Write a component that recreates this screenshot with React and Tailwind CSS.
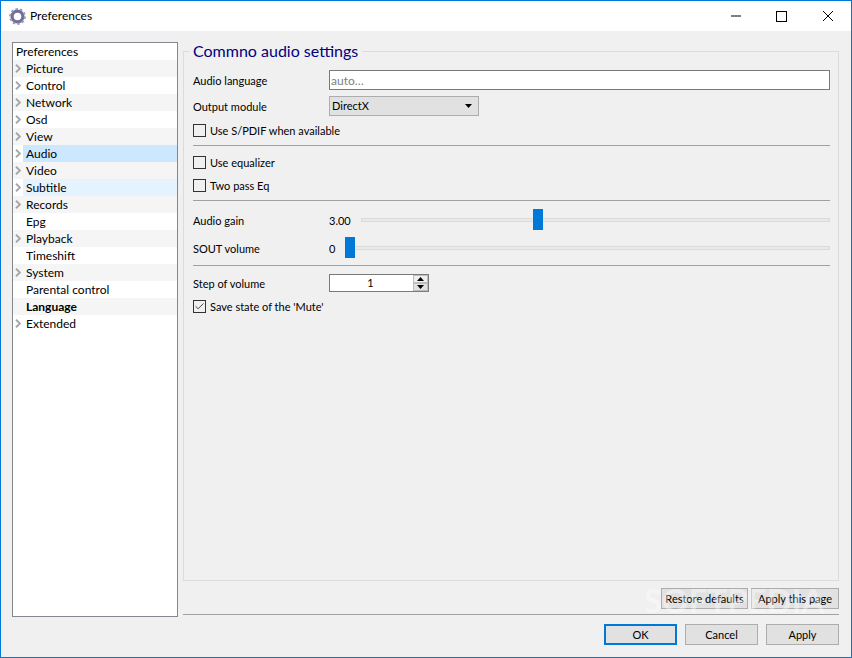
import React from 'react';
import { Check } from 'lucide-react';

const tree = [
  ['Preferences', 0, ''], ['Picture', 1, 'alt'], ['Control', 1, ''], ['Network', 1, 'alt'], ['Osd', 1, ''],
  ['View', 1, 'alt'], ['Audio', 1, 'sel'], ['Video', 1, 'alt'], ['Subtitle', 1, 'hov'], ['Records', 1, 'alt'],
  ['Epg', 2, ''], ['Playback', 1, 'alt'], ['Timeshift', 2, ''], ['System', 1, 'alt'], ['Parental control', 2, ''],
  ['Language', 2, 'altb'], ['Extended', 1, ''],
];

const rowBg = { alt: 'bg-[#f5f5f5]', altb: 'bg-[#f5f5f5]', sel: 'bg-[#cce8ff]', hov: 'bg-[#e5f3ff]', '': 'bg-white' };

function TreeRow({ label, kind, state }) {
  if (kind === 0) return <div className="h-[17px] leading-[17px] pl-[3px] bg-white">{label}</div>;
  const stripe = state === 'sel' || state === 'hov' ? 'bg-white' : rowBg[state];
  return (
    <div className={`h-[17px] flex ${stripe}`}>
      <div className="w-[10px] flex items-center justify-center shrink-0">
        {kind === 1 && (
          <svg className="w-[6px] h-[9px]" viewBox="0 0 6 9">
            <path d="M1 0.7L5 4.5L1 8.3" fill="none" stroke="#a6a6a6" strokeWidth="1.9" />
          </svg>
        )}
      </div>
      <div className={`flex-1 leading-[17px] pl-[3px] ${rowBg[state]} ${state === 'altb' ? 'font-bold' : ''}`}>{label}</div>
    </div>
  );
}

function Box({ checked }) {
  return (
    <span className="w-[13px] h-[13px] border border-[#333333] flex items-center justify-center shrink-0">
      {checked && <Check className="w-[11px] h-[11px] text-[#333333]" strokeWidth={2} />}
    </span>
  );
}

function CheckRow({ label, checked, cls }) {
  return (
    <div className={`flex items-center gap-[4px] h-[13px] ${cls}`}>
      <Box checked={checked} />
      <span className="pt-px">{label}</span>
    </div>
  );
}

const Sep = ({ cls }) => <div className={`h-px bg-[#a0a0a0] ${cls}`} />;

function Slider({ label, value, offset, left, cls }) {
  return (
    <div className={`flex items-center h-[21px] ${cls}`}>
      <span className="w-[136px] shrink-0 pt-[3px]">{label}</span>
      <span className={`${left} shrink-0 pt-[3px]`}>{value}</span>
      <div className="flex-1 relative h-[21px] flex items-center">
        <div className="h-[4px] w-full bg-[#e7eae8] border border-[#dadcdb]" />
        <div className={`absolute top-0 h-[21px] w-[10px] bg-[#0078d7] ${offset}`} />
      </div>
    </div>
  );
}

const Btn = ({ children, cls }) => (
  <button className={`h-[21px] pt-px bg-[#e1e1e1] flex items-center justify-center whitespace-nowrap ${cls}`}>{children}</button>
);

export default function App() {
  return (
    <div className="w-[852px] h-[658px] relative overflow-hidden flex flex-col border border-[#0078d7] bg-[#f0f0f0] text-[12px] text-[#000000]" style={{ fontFamily: 'Lato, "Noto Sans", sans-serif' }}>
      <div className="h-[30px] bg-white flex items-center shrink-0">
        <svg className="ml-[8px] w-[17px] h-[17px]" viewBox="0 0 17 17">
          <circle cx="8.5" cy="8.5" r="5.4" fill="none" stroke="#6f6f9a" strokeWidth="3.2" />
          <circle cx="8.5" cy="8.5" r="7.4" fill="none" stroke="#9a9ab0" strokeWidth="2" strokeDasharray="2.4 2.25" />
        </svg>
        <span className="ml-[4px]">Preferences</span>
        <div className="ml-auto flex items-center">
          <svg className="w-[12px] h-[12px] mr-[34px]" viewBox="0 0 12 12"><path d="M1 6h10" stroke="#000" strokeWidth="1" fill="none" /></svg>
          <svg className="w-[11px] h-[11px] mr-[35px]" viewBox="0 0 11 11"><rect x="0.5" y="0.5" width="10" height="10" stroke="#000" fill="none" /></svg>
          <svg className="w-[12px] h-[12px] mr-[17px]" viewBox="0 0 12 12"><path d="M1 1l10 10M11 1L1 11" stroke="#000" strokeWidth="1" fill="none" /></svg>
        </div>
      </div>

      <div className="flex-1 flex pl-[11px] pr-[12px] pt-[11px]">
        <div className="w-[166px] h-[575px] shrink-0 border border-[#828790] bg-white">
          {tree.map(([label, kind, state]) => <TreeRow key={label} label={label} kind={kind} state={state} />)}
        </div>

        <div className="ml-[5px] flex-1 flex flex-col text-[11px]">
          <div className="relative mt-[9px] h-[530px] border border-[#dcdcdc] pl-[9px] pr-[8px] pt-[18px]">
            <span className="absolute left-[5px] top-[-12px] px-[4px] bg-[#f0f0f0] text-[16px] leading-[21px] text-[#000080]">Commno audio settings</span>
            <div className="flex items-center h-[20px]">
              <span className="w-[136px] shrink-0 pt-[2px]">Audio language</span>
              <div className="flex-1 h-[20px] bg-white border border-[#7a7a7a] pl-[1px] leading-[19px] text-[12px] text-[#808080]">auto…</div>
            </div>
            <div className="flex items-center h-[20px] mt-[6px]">
              <span className="w-[136px] shrink-0 pt-[2px]">Output module</span>
              <div className="w-[150px] h-[20px] bg-[#e1e1e1] border border-[#adadad] pl-[2px] pr-[6px] flex items-center justify-between">
                <span>DirectX</span>
                <svg className="w-[7px] h-[4px]" viewBox="0 0 7 4"><path d="M0 0h7L3.5 4z" fill="#000" /></svg>
              </div>
            </div>
            <CheckRow label="Use S/PDIF when available" cls="mt-[8px]" />
            <Sep cls="mt-[8px]" />
            <CheckRow label="Use equalizer" cls="mt-[10px]" />
            <CheckRow label="Two pass Eq" cls="mt-[10px]" />
            <Sep cls="mt-[8px]" />
            <Slider label="Audio gain" value="3.00" left="w-[32px]" offset="left-[172px]" cls="mt-[8px]" />
            <Slider label="SOUT volume" value="0" left="w-[16px]" offset="left-0" cls="mt-[7px]" />
            <Sep cls="mt-[7px]" />
            <div className="flex items-center h-[18px] mt-[8px]">
              <span className="w-[136px] shrink-0 pt-[2px]">Step of volume</span>
              <div className="w-[100px] h-[18px] bg-white border border-[#7a7a7a] flex items-center">
                <span className="flex-1 text-center pr-[2px]">1</span>
                <div className="w-[15px] h-[16px] flex flex-col">
                  <div className="h-[8px] bg-[#f0f0f0] border border-[#bdbdbd] flex items-center justify-center">
                    <svg className="w-[7px] h-[4px]" viewBox="0 0 7 4"><path d="M0 4h7L3.5 0z" fill="#000" /></svg>
                  </div>
                  <div className="h-[8px] bg-[#e1e1e1] border border-[#bdbdbd] flex items-center justify-center">
                    <svg className="w-[7px] h-[4px]" viewBox="0 0 7 4"><path d="M0 0h7L3.5 4z" fill="#000" /></svg>
                  </div>
                </div>
              </div>
            </div>
            <CheckRow label="Save state of the 'Mute'" checked cls="mt-[8px]" />
          </div>

          <div className="flex justify-end gap-[3px] mt-[7px]">
            <Btn cls="w-[87px] border border-[#adadad]">Restore defaults</Btn>
            <Btn cls="w-[88px] border border-[#adadad]">Apply this page</Btn>
          </div>
          <div className="h-px bg-[#a0a0a0] mt-[5px]" />
          <div className="flex justify-end gap-[8px] mt-[9px]">
            <Btn cls="w-[73px] border-2 border-[#0078d7]">OK</Btn>
            <Btn cls="w-[73px] border border-[#adadad]">Cancel</Btn>
            <Btn cls="w-[73px] border border-[#adadad]">Apply</Btn>
          </div>
        </div>
      </div>

      <span className="absolute left-[643px] top-[579px] text-[33px] leading-[40px] font-bold text-white/40 pointer-events-none">SOFTPEDIA</span>
    </div>
  );
}
